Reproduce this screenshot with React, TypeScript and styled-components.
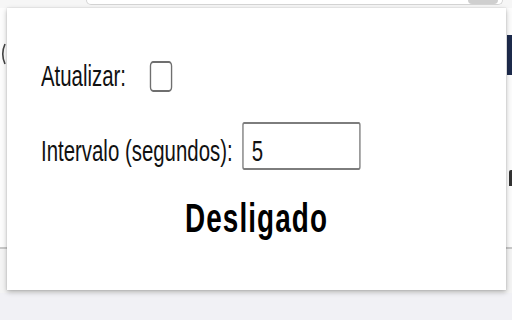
import React, { useState } from 'react';
import styled, { createGlobalStyle } from 'styled-components';

const GlobalStyle = createGlobalStyle`
  html, body {
    margin: 0;
    padding: 0;
    overflow: hidden;
  }
  body {
    font-family: 'Liberation Sans', Arial, sans-serif;
  }
`;

// the page behind the popup
const Page = styled.div`
  position: relative;
  width: 512px;
  height: 320px;
  display: flex;
  flex-direction: column;
  background-color: #fff;
`;
const TopStrip = styled.div`
  height: 8px;
  display: flex;
  padding-left: 86px;
  background-color: #f6f6f6;
`;
const AddressBar = styled.div`
  width: 411px;
  height: 4px;
  display: flex;
  justify-content: flex-end;
  padding-right: 4px;
  background-color: #fff;
  border: 1px solid #d4d4d4;
  border-top: none;
  border-radius: 0 0 8px 8px;
`;
const AddressBlob = styled.div`
  width: 30px;
  height: 4px;
  border-radius: 0 0 10px 10px;
  background-color: #cfcfcf;
`;
const Main = styled.div`
  height: 239px;
  display: flex;
  justify-content: space-between;
  background-color: #fcfcfc;
`;
const LeftEdge = styled.div`
  padding-top: 35px;
`;
const RightEdge = styled.div`
  display: flex;
  flex-direction: column;
  align-items: flex-end;
  padding-top: 27px;
`;
const NavyBlock = styled.div`
  width: 5px;
  height: 40px;
  background-color: #1d2b4c;
`;
// a letter stem of the page text, cut by the window edge
const EdgeStem = styled.div`
  margin-top: 95px;
  width: 3px;
  height: 16px;
  border-radius: 2px 0 0 0;
  background-color: #333;
`;
const Divider = styled.div`
  height: 2px;
  background-color: #c8c8c8;
`;
const Lower = styled.div`
  flex: 1;
  background-color: #f1f1f5;
  border-top: 44px solid #f4f4f4;
`;

// the popup
const Popup = styled.div`
  position: absolute;
  top: 8px;
  left: 7px;
  width: 499px;
  height: 282px;
  overflow: hidden;
  background-color: #fff;
  box-shadow: 0 2px 5px rgba(0, 0, 0, 0.28), 0 0 1px rgba(0, 0, 0, 0.2);
`;
const Content = styled.div`
  width: 734px;
  box-sizing: border-box;
  padding-top: 48px;
  display: flex;
  flex-direction: column;
  gap: 26px;
  transform: scaleX(0.68);
  transform-origin: 0 0;
  color: #111;
`;
const Row = styled.div<{ $align: string }>`
  display: flex;
  align-items: ${(p) => p.$align};
  height: ${(p) => (p.$align === 'center' ? '40px' : 'auto')};
  padding-left: 50px;
`;
const Label = styled.label<{ $gap: number }>`
  font-size: 30px;
  line-height: 40px;
  margin-right: ${(p) => p.$gap}px;
`;
const Check = styled.span`
  width: 29px;
  height: 27px;
  border: 2px solid #6f6f6f;
  border-radius: 5px;
  background-color: #fff;
`;
const NumberInput = styled.input`
  width: 174px;
  height: 48px;
  box-sizing: border-box;
  padding: 10px 12px 0;
  border: 2px solid #7d7d7d;
  border-radius: 3px;
  font-family: 'Liberation Sans', Arial, sans-serif;
  font-size: 30px;
  color: #111;
  outline: none;
`;
const Status = styled.div`
  margin-top: 1px;
  text-align: center;
  font-size: 41px;
  line-height: 41px;
  font-weight: 700;
  letter-spacing: 1.6px;
  color: #000;
`;

export default function App() {
  const [intervalo, setIntervalo] = useState('5');

  return (
    <Page>
      <GlobalStyle />
      <TopStrip>
        <AddressBar>
          <AddressBlob />
        </AddressBar>
      </TopStrip>
      <Main>
        <LeftEdge>
          <svg width="6" height="22" viewBox="0 0 6 22">
            <path d="M5 1 Q0.5 11 5 21" fill="none" stroke="#444" strokeWidth="1.6" />
          </svg>
        </LeftEdge>
        <RightEdge>
          <NavyBlock />
          <EdgeStem />
        </RightEdge>
      </Main>
      <Divider />
      <Lower />

      <Popup>
        <Content>
          <Row $align="center">
            <Label $gap={35}>Atualizar:</Label>
            <Check />
          </Row>
          <Row $align="baseline">
            <Label $gap={14}>Intervalo (segundos):</Label>
            <NumberInput value={intervalo} onChange={(e) => setIntervalo(e.target.value)} />
          </Row>
          <Status>Desligado</Status>
        </Content>
      </Popup>
    </Page>
  );
}
